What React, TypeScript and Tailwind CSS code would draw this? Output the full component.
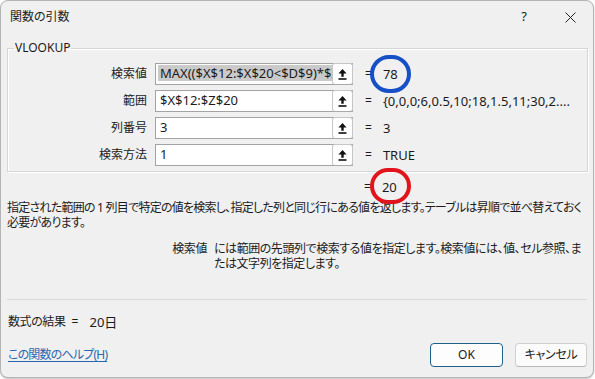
const rows = [
  { label: '検索値', value: 'MAX(($X$12:$X$20<$D$9)*$X$12:$Z$20', result: '78', selected: true },
  { label: '範囲', value: '$X$12:$Z$20', result: '{0,0,0;6,0.5,10;18,1.5,11;30,2....' },
  { label: '列番号', value: '3', result: '3' },
  { label: '検索方法', value: '1', result: 'TRUE' },
];

function RefIcon() {
  return (
    <svg width="9" height="11" viewBox="0 0 9 11" fill="#111">
      <path d="M4.5 0 L8.6 4.4 H5.7 V7.8 H3.3 V4.4 H0.4 Z" />
      <rect x="0.5" y="9.2" width="8" height="1.6" />
    </svg>
  );
}

export default function App() {
  return (
    <div className="w-[595px] h-[379px] bg-white relative font-['Noto_Sans','Noto_Sans_CJK_JP',sans-serif] text-[12px] text-[#1b1b1b] [font-feature-settings:'palt']">
      <div className="w-[594px] h-[378px] rounded-[8px] border border-[#b4b4b4] bg-[#f0f0f0] flex flex-col overflow-hidden shadow-[0_1px_2px_rgba(0,0,0,0.25)]">
        {/* Title bar */}
        <div className="h-[32px] flex items-center pl-[9px] shrink-0">
          <span className="leading-[16px]">関数の引数</span>
          <span className="ml-auto w-[46px] text-center text-[13px]">?</span>
          <span className="w-[46px] flex justify-center">
            <svg width="11" height="11" viewBox="0 0 11 11" stroke="#222" strokeWidth="1">
              <path d="M0.5 0.5 L10.5 10.5 M10.5 0.5 L0.5 10.5" />
            </svg>
          </span>
        </div>

        {/* Arguments group */}
        <fieldset className="mt-[7px] ml-[6px] w-[581px] border border-[#d6d6d6] shadow-[inset_1px_1px_0_#fff,1px_1px_0_#fff] pb-[5px] shrink-0">
          <legend className="ml-[6px] px-[1px] leading-[16px]">VLOOKUP</legend>
          <div className="flex flex-col gap-[5px] pt-[7px]">
            {rows.map((r) => (
              <div key={r.label} className="flex items-center h-[22px]">
                <div className="w-[139px] text-right leading-[16px]">{r.label}</div>
                <div className="ml-[8px] w-[198px] h-[22px] bg-white border border-[#a3a3a3] flex items-center">
                  <div className="flex-1 overflow-hidden whitespace-nowrap pl-[2px] text-[13px]">
                    <span className={`px-[2px] leading-[16px] inline-block ${r.selected ? 'bg-[#cacaca]' : ''}`}>{r.value}</span>
                  </div>
                  <div className="w-[21px] h-[22px] -mr-px -my-px bg-white border border-[#c6c6c6] border-b-[#a9a9a9] rounded-[3px] flex items-center justify-center shrink-0">
                    <RefIcon />
                  </div>
                </div>
                <span className="ml-[12px] leading-[16px]">=</span>
                <span className="ml-[11px] leading-[16px] whitespace-nowrap text-[13px]">{r.result}</span>
              </div>
            ))}
          </div>
        </fieldset>

        {/* Function result */}
        <div className="flex items-center h-[16px] mt-[7px] pl-[363px] shrink-0">
          <span className="leading-[16px]">=</span>
          <span className="ml-[11px] leading-[16px] text-[13px]">20</span>
        </div>

        {/* Description */}
        <p className="mt-[5px] pl-[6px] leading-[15px] whitespace-nowrap tracking-[-0.75px]">
          指定された範囲の 1 列目で特定の値を検索し、指定した列と同じ行にある値を返します。テーブルは昇順で並べ替えておく
          <br />
          必要があります。
        </p>

        <div className="mt-[11px] flex leading-[15px]">
          <span className="w-[206px] text-right shrink-0 tracking-[-0.4px]">検索値</span>
          <p className="ml-[7px] whitespace-nowrap tracking-[-0.45px]">
            には範囲の先頭列で検索する値を指定します。検索値には、値、セル参照、ま
            <br />
            たは文字列を指定します。
          </p>
        </div>

        <div className="mt-[28px] mx-[6px] h-px bg-[#dadada] shrink-0" />

        <div className="mt-[14px] pl-[7px] flex items-center leading-[16px]">
          <span className="tracking-[-0.4px]">数式の結果</span>
          <span className="ml-[6px]">=</span>
          <span className="ml-[11px] text-[13px]">20日</span>
        </div>

        {/* Footer */}
        <div className="mt-[13px] flex items-center pr-[6px] pl-[7px]">
          <a className="text-[#2a67b1] underline underline-offset-2 leading-[16px] cursor-pointer tracking-[-0.8px]">この関数のヘルプ(H)</a>
          <button className="ml-auto w-[73px] h-[24px] rounded-[4px] border border-[#1f5f8b] bg-[#fdfdfd] leading-[16px]">OK</button>
          <button className="ml-[12px] w-[72px] h-[24px] rounded-[4px] border border-[#d0d0d0] border-b-[#b8b8b8] bg-[#fbfbfb] leading-[16px] tracking-[-0.3px]">キャンセル</button>
        </div>
      </div>

      {/* Annotation rings */}
      <div className="absolute left-[370px] top-[55px] w-[41px] h-[38px] rounded-full border-[4px] border-[#1550c6]" />
      <div className="absolute left-[370px] top-[168px] w-[41px] h-[36px] rounded-full border-[4px] border-[#e2141b]" />
    </div>
  );
}
